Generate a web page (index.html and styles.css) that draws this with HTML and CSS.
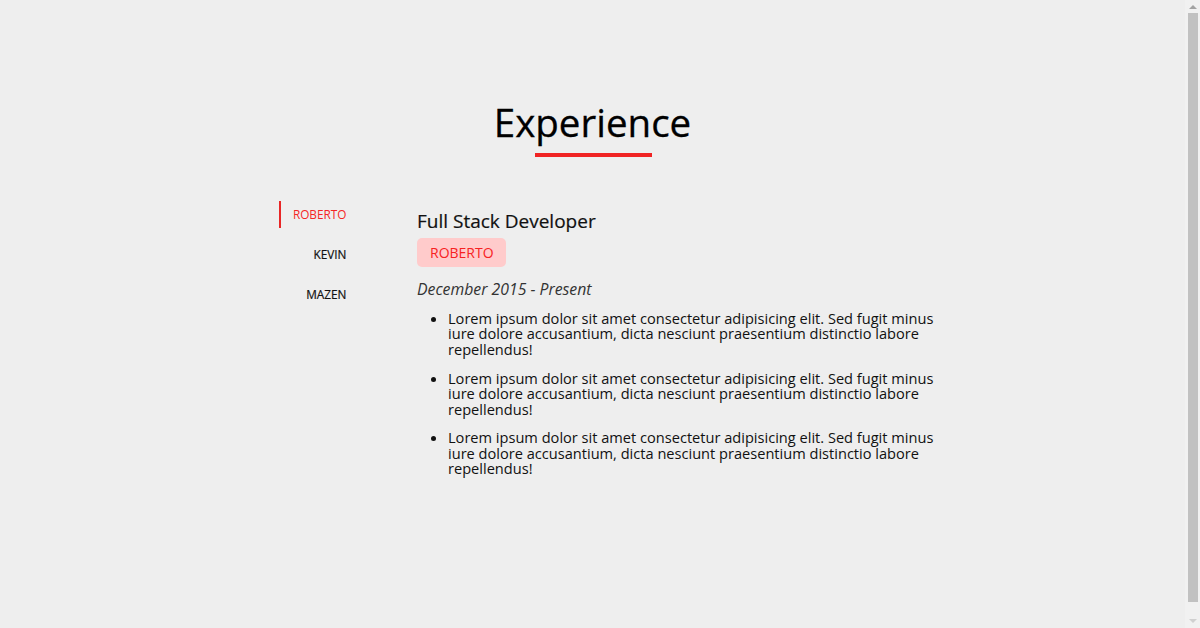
FILE: index.html
```html
<!DOCTYPE html>
<html lang="en">
<head>
<meta charset="utf-8">
<title>Experience</title>
<link rel="stylesheet" href="styles.css">
</head>
<body>
<section class="experience">
  <h1 class="section-title">Experience</h1>
  <div class="title-bar"></div>
  <div class="exp-wrap">
    <nav class="tabs">
      <button class="tab active">ROBERTO</button>
      <button class="tab">KEVIN</button>
      <button class="tab">MAZEN</button>
    </nav>
    <div class="job">
      <h2 class="job-title">Full Stack Developer</h2>
      <span class="company">ROBERTO</span>
      <p class="dates">December 2015 - Present</p>
      <ul class="duties">
        <li>Lorem ipsum dolor sit amet consectetur adipisicing elit. Sed fugit minus iure dolore accusantium, dicta nesciunt praesentium distinctio labore repellendus!</li>
        <li>Lorem ipsum dolor sit amet consectetur adipisicing elit. Sed fugit minus iure dolore accusantium, dicta nesciunt praesentium distinctio labore repellendus!</li>
        <li>Lorem ipsum dolor sit amet consectetur adipisicing elit. Sed fugit minus iure dolore accusantium, dicta nesciunt praesentium distinctio labore repellendus!</li>
      </ul>
    </div>
  </div>
</section>
<div class="scrollbar" aria-hidden="true">
  <div class="sb-up"></div>
  <div class="sb-thumb"></div>
  <div class="sb-down"></div>
</div>
</body>
</html>
```
FILE: styles.css
```css
html, body { margin: 0; padding: 0; }
body {
  background: #eeeeee;
  font-family: "Open Sans", "Noto Sans", sans-serif;
  color: #111;
  margin-right: 15px;
}
.experience { padding-top: 97px; }
.section-title {
  margin: 0;
  text-align: center;
  font-size: 38.5px;
  font-weight: 400;
  line-height: 50px;
  color: #000;
  -webkit-text-stroke: 0.3px #000;
}
.title-bar {
  width: 117px;
  height: 4px;
  background: #f02323;
  margin: 6px auto 0;
  position: relative;
  left: 1px;
}
.exp-wrap {
  width: 700px;
  margin: 44px auto 0;
  display: flex;
  align-items: flex-start;
}
.tabs {
  width: 104px;
  display: flex;
  flex-direction: column;
  align-items: flex-end;
  gap: 13px;
}
.tab {
  font-family: inherit;
  font-size: 11.8px;
  color: #111;
  background: transparent;
  border: 0;
  border-left: 2px solid transparent;
  height: 27px;
  padding: 0 0 2px 12px;
  cursor: pointer;
  -webkit-text-stroke: 0.2px currentColor;
}
.tab.active {
  color: #f52525;
  border-left-color: #e82626;
  -webkit-text-stroke: 0;
}
.job {
  margin-left: 70.5px;
  flex: 1;
  padding-top: 6px;
}
.job-title {
  margin: 0;
  font-size: 19px;
  font-weight: 400;
  line-height: 28px;
  color: #111;
  -webkit-text-stroke: 0.2px #111;
}
.company {
  display: inline-block;
  margin-top: 3px;
  background: #ffcbcb;
  color: #f72222;
  border-radius: 5px;
  font-size: 14px;
  line-height: 29px;
  padding: 0 12px 0 13px;
}
.dates {
  margin: 12px 0 0;
  font-style: italic;
  font-size: 15.8px;
  line-height: 20px;
  color: #333;
}
.duties {
  margin: 12px 0 0;
  padding-left: 31px;
  font-size: 14.6px;
  line-height: 15.4px;
  color: #111;
}
.duties li { margin-bottom: 13.5px; }

.scrollbar {
  position: fixed;
  top: 0;
  right: 0;
  width: 15px;
  height: 100%;
  background: #f1f1f1;
}
.sb-up, .sb-down {
  position: absolute;
  left: 4px;
  width: 0;
  height: 0;
  border-left: 4px solid transparent;
  border-right: 4px solid transparent;
}
.sb-up { top: 5px; border-bottom: 4px solid #a3a3a3; }
.sb-down { bottom: 5px; border-top: 4px solid #d0d0d0; }
.sb-thumb {
  position: absolute;
  top: 13px;
  left: 3px;
  width: 10px;
  height: 589px;
  background: #c1c1c1;
}
```
